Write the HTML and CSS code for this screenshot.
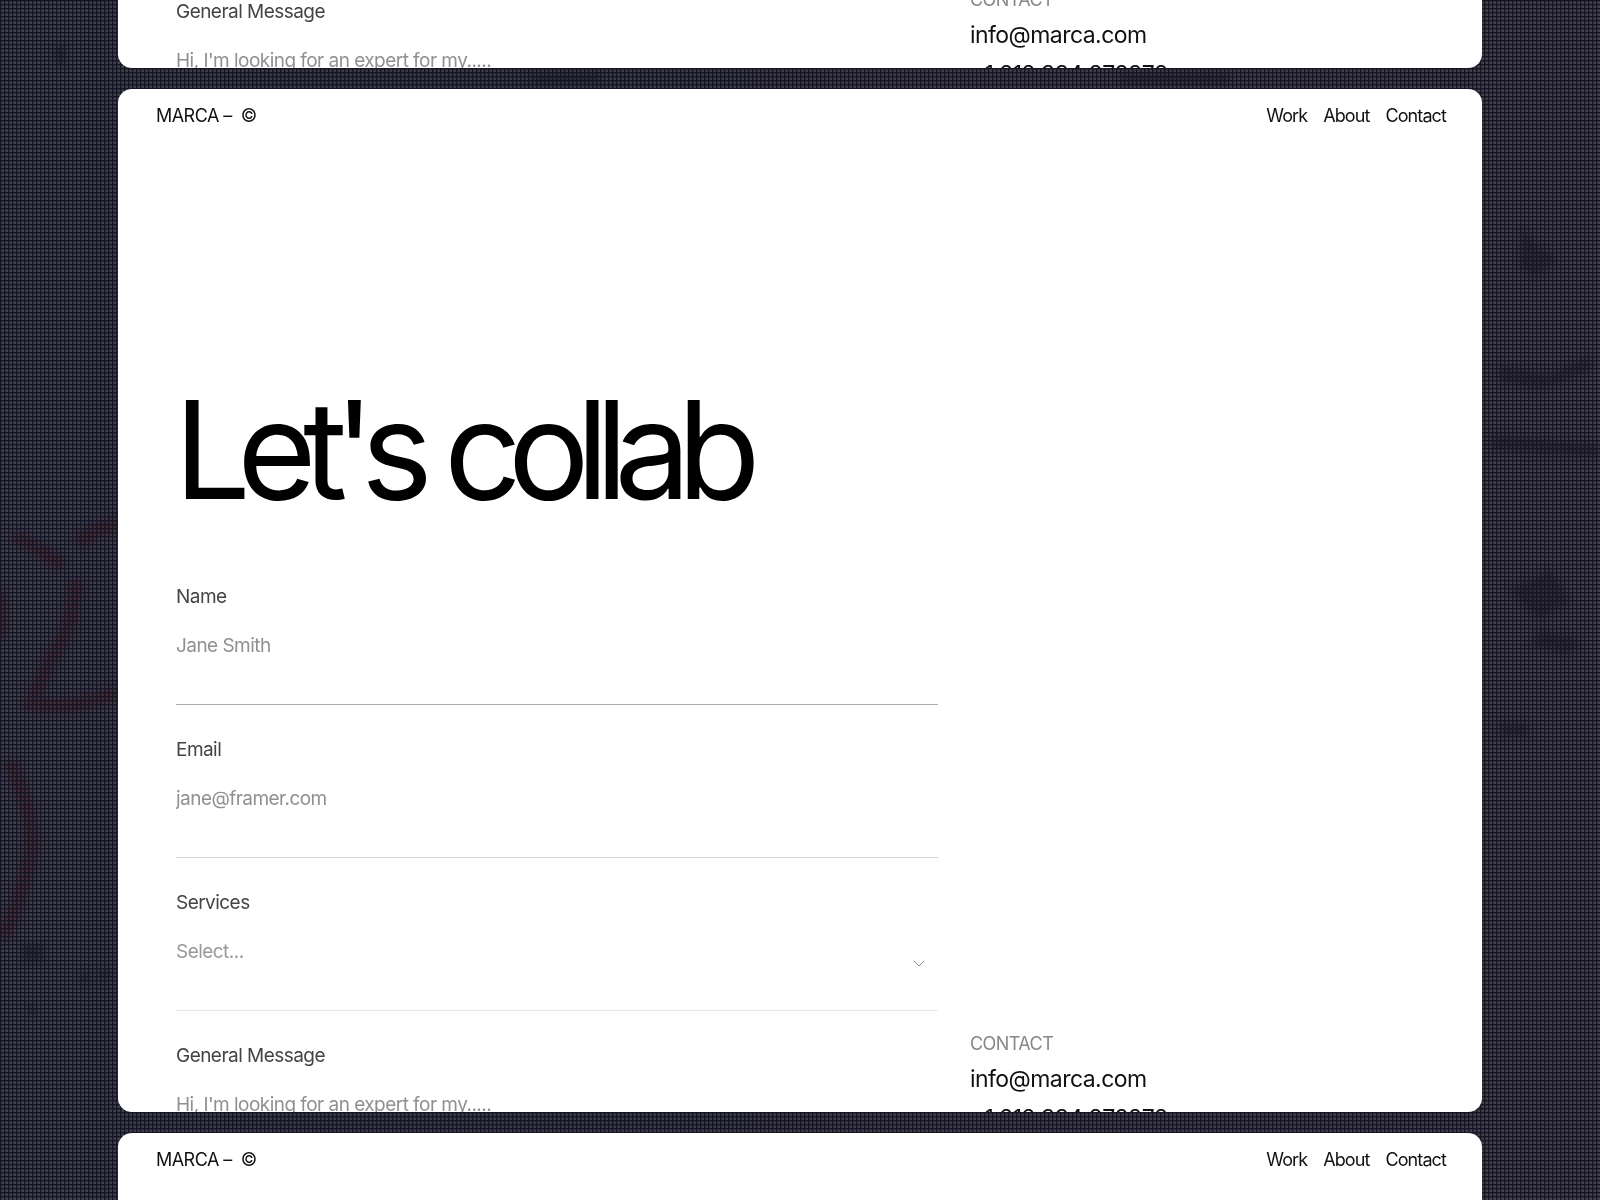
FILE: index.html
```
<!DOCTYPE html>
<html lang="en">
<head>
<meta charset="UTF-8">
<meta name="viewport" content="width=device-width, initial-scale=1">
<title>MARCA - Contact</title>
<link rel="stylesheet" href="styles.css">
</head>
<body>
<svg class="backdrop" viewBox="0 0 1600 1200" preserveAspectRatio="none" aria-hidden="true">
	<defs>
		<linearGradient id="tone" x1="0" x2="1" y1="0" y2="0">
			<stop offset="0" stop-color="#41444c"/>
			<stop offset="0.2" stop-color="#393a41"/>
			<stop offset="1" stop-color="#424048"/>
		</linearGradient>
		<filter id="soft" x="-50%" y="-50%" width="200%" height="200%"><feGaussianBlur stdDeviation="3"/></filter>
	</defs>
	<rect width="1600" height="1200" fill="url(#tone)"/>
	<g class="smoke" filter="url(#soft)">
		<path d="M1522 228l14 18 20 12-20 20-16-12zM1500 365l50 10 40-20v16l-50 18-40-8zM1490 435l110 10v12l-110-8zM1510 590l40-20 20 30-30 20zM1540 630l40 10-10 14-40-8zM1500 724h28v12h-28zM22 944h20v18H22zM80 974h10v8H80zM98 970h12v8H98zM28 1006h9v8h-9zM56 46h9v18h-9zM530 74h70v8h-70zM1120 74h110v8h-110z"/>
	</g>
	<g class="strokes" filter="url(#soft)">
		<path d="M14 536Q40 548 62 566M76 580Q74 630 48 664L32 704Q70 712 116 692M78 545Q96 524 118 526M0 590V640M10 760Q44 840 26 870Q22 900 2 940"/>
	</g>
</svg>
<div class="mesh"></div>
<main class="stack">
	<section class="card">
		<header class="bar">
			<a class="logo" href="#">MARCA – &nbsp;©</a>
			<nav class="menu">
				<a href="#">Work</a>
				<a href="#">About</a>
				<a href="#">Contact</a>
			</nav>
		</header>
		<h2 class="title">Let's collab</h2>
		<div class="columns">
			<form class="form">
				<div class="field">
					<label for="name1">Name</label>
					<input id="name1" type="text" placeholder="Jane Smith">
				</div>
				<div class="field email">
					<label for="email1">Email</label>
					<input id="email1" type="email" placeholder="jane@framer.com">
				</div>
				<div class="field services">
					<label for="service1">Services</label>
					<select id="service1"><option>Select...</option></select>
					<svg class="arrow" viewBox="0 0 12 8"><path d="M1 1l5 5 5-5"/></svg>
				</div>
				<div class="field">
					<label for="message1">General Message</label>
					<textarea id="message1" placeholder="Hi, I'm looking for an expert for my....."></textarea>
				</div>
			</form>
			<address class="contact">
				<h3>CONTACT</h3>
				<a href="mailto:info@marca.com">info@marca.com</a>
				<a href="tel:+1212334878878">+1 212 334 878878</a>
			</address>
		</div>
	</section>
	<section class="card">
		<header class="bar">
			<a class="logo" href="#">MARCA – &nbsp;©</a>
			<nav class="menu">
				<a href="#">Work</a>
				<a href="#">About</a>
				<a href="#">Contact</a>
			</nav>
		</header>
		<h1 class="title">Let's collab</h1>
		<div class="columns">
			<form class="form">
				<div class="field">
					<label for="name2">Name</label>
					<input id="name2" type="text" placeholder="Jane Smith">
				</div>
				<div class="field email">
					<label for="email2">Email</label>
					<input id="email2" type="email" placeholder="jane@framer.com">
				</div>
				<div class="field services">
					<label for="service2">Services</label>
					<select id="service2"><option>Select...</option></select>
					<svg class="arrow" viewBox="0 0 12 8"><path d="M1 1l5 5 5-5"/></svg>
				</div>
				<div class="field">
					<label for="message2">General Message</label>
					<textarea id="message2" placeholder="Hi, I'm looking for an expert for my....."></textarea>
				</div>
			</form>
			<address class="contact">
				<h3>CONTACT</h3>
				<a href="mailto:info@marca.com">info@marca.com</a>
				<a href="tel:+1212334878878">+1 212 334 878878</a>
			</address>
		</div>
	</section>
	<section class="card">
		<header class="bar">
			<a class="logo" href="#">MARCA – &nbsp;©</a>
			<nav class="menu">
				<a href="#">Work</a>
				<a href="#">About</a>
				<a href="#">Contact</a>
			</nav>
		</header>
	</section>
</main>
</body>
</html>
```

FILE: styles.css
```
*{
	box-sizing:border-box;
}
body{
	margin:0;
	height:100vh;
	overflow:hidden;
	background-color:#171627;
	color:#111;
	font-family:Inter, "Liberation Sans", sans-serif;
	font-size:18px;
	letter-spacing:-0.03em;
}
a{
	color:inherit;
	text-decoration:none;
}

/* background */
.backdrop,
.mesh{
	position:fixed;
	left:0;
	top:0;
	width:100%;
	height:100%;
}
.smoke{
	fill:#1b1a2c;
	opacity:0.6;
}
.strokes{
	fill:none;
	stroke:#45222a;
	stroke-width:14px;
	opacity:0.75;
}
.mesh{
	background-image:
		linear-gradient(to right, #151426 1px, rgba(21,20,38,0.35) 1px, rgba(21,20,38,0.35) 2px, transparent 2px),
		linear-gradient(to bottom, #151426 1px, rgba(21,20,38,0.35) 1px, rgba(21,20,38,0.35) 2px, transparent 2px);
	background-size:4px 4px;
}

/* cards */
.stack{
	position:relative;
	height:100%;
	padding:0 118px;
	display:flex;
	flex-direction:column;
	justify-content:center;
	gap:21px;
}
.card{
	flex:none;
	aspect-ratio:4 / 3;
	min-height:0;
	overflow:hidden;
	border-radius:14px;
	background-color:#fff;
}
.bar{
	display:flex;
	justify-content:space-between;
	padding:15px 36px 0 38px;
	line-height:24px;
}
.menu{
	display:flex;
	gap:16px;
	letter-spacing:-0.05em;
}
.title{
	margin:0;
	padding:242px 56px 0;
	font-size:136px;
	font-weight:400;
	line-height:160px;
	letter-spacing:-0.1em;
	color:#000;
}

/* form */
.columns{
	display:grid;
	grid-template-columns:5fr 3fr;
	gap:32px;
	padding:55px 55px 0 58px;
}
.field{
	position:relative;
	height:153px;
}
.field label{
	display:block;
	line-height:24px;
	font-size:19px;
	color:#444;
}
.field input,
.field select,
.field textarea{
	display:block;
	width:100%;
	height:96px;
	margin:0;
	padding:25px 0 46px;
	border:0;
	border-bottom:1px solid #aaa;
	border-radius:0;
	outline:0;
	background:none;
	font:inherit;
	font-size:19px;
	line-height:24px;
	letter-spacing:inherit;
	color:#999;
	resize:none;
	appearance:none;
}
.field ::placeholder{
	color:#909090;
	opacity:1;
}
.email input{
	border-color:#d4d4d4;
}
.services select{
	border-color:#e8e8e8;
}
.arrow{
	position:absolute;
	right:13px;
	top:69px;
	width:12px;
	height:8px;
	fill:none;
	stroke:#888;
	stroke-width:1px;
}
.contact{
	padding-top:447px;
	font-style:normal;
}
.contact h3{
	margin:0 0 7px;
	font-size:18px;
	font-weight:400;
	line-height:24px;
	color:#888;
}
.contact a{
	display:block;
	margin-bottom:7px;
	font-size:23px;
	line-height:32px;
}
```
